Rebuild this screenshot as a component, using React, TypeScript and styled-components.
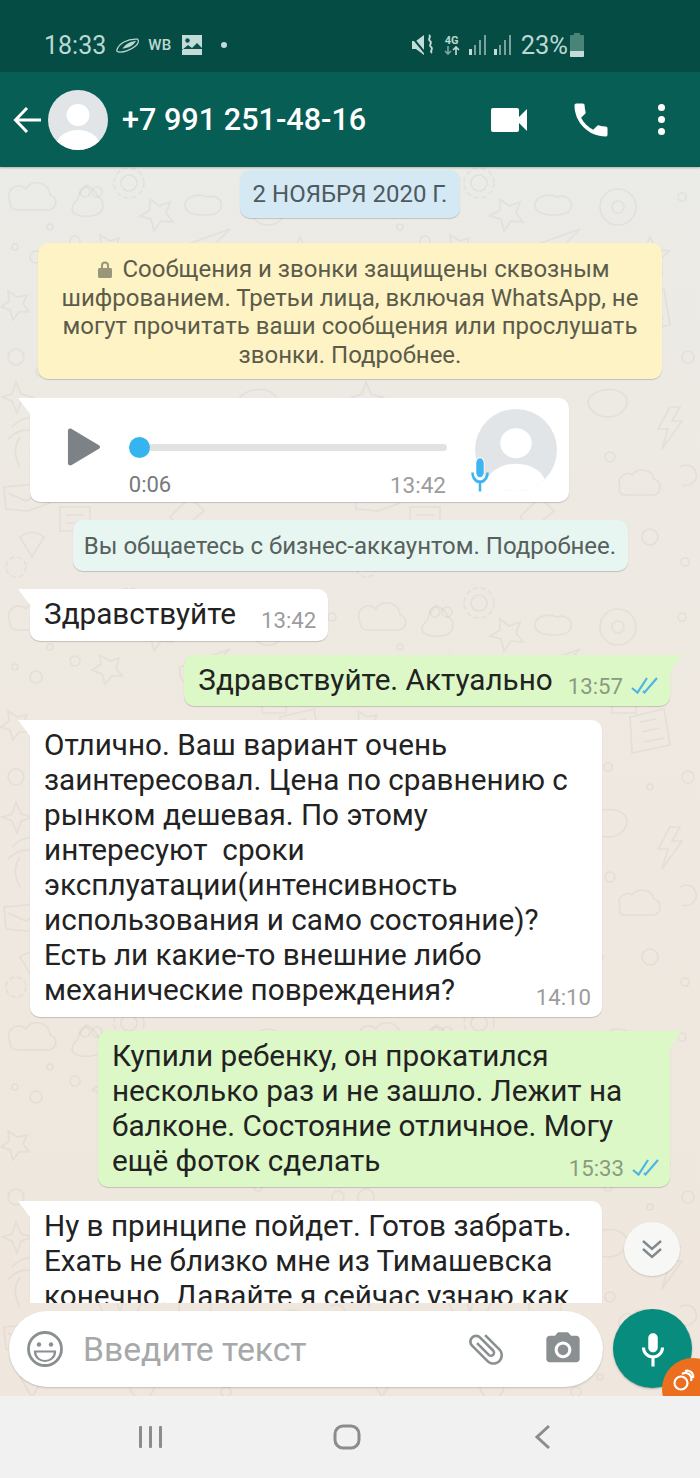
import React from 'react';
import styled, { createGlobalStyle } from 'styled-components';

const GlobalStyle = createGlobalStyle`
  html, body { margin: 0; padding: 0; }
  body { font-family: Roboto, "Liberation Sans", sans-serif; background: #f1f1f1; }
  #root { width: 700px; height: 1478px; overflow: hidden; }
`;

const Avatar = ({ size }: { size: number }) => (
  <svg width={size} height={size} viewBox="0 0 60 60">
    <defs>
      <clipPath id={`av${size}`}>
        <circle cx="30" cy="30" r="30" />
      </clipPath>
    </defs>
    <g clipPath={`url(#av${size})`}>
      <rect width="60" height="60" fill="#e1e5e8" />
      <ellipse cx="30" cy="25" rx="11.5" ry="11" fill="#fff" />
      <ellipse cx="30" cy="56" rx="22" ry="16" fill="#fff" />
    </g>
  </svg>
);

const Wallpaper = () => (
  <WallpaperSvg width="700" height="1229">
    <defs>
      <pattern id="doodles" width="350" height="420" patternUnits="userSpaceOnUse" x="0" y="0">
        <g fill="none" stroke="#000" strokeOpacity="0.045" strokeWidth="1.6">
          <path d="M10 36c-6-14 8-22 16-14 4-10 24-8 24 6 8 2 8 14-2 15H18c-5 0-8-3-8-7z" />
          <path d="M78 32c0-8 6-8 8-14 4 2 10 6 12 12 6 2 8 14-2 18-10 3-24 1-24-6 0-4 3-7 6-10z" />
          <circle cx="85" cy="25" r="5" />
          <circle cx="97" cy="25" r="5" />
          <circle cx="129" cy="16" r="8" />
          <circle cx="129" cy="16" r="15" strokeDasharray="5 3" />
          <path d="M150 32l9 7 11-4-4 11 7 9-12-1-7 10-3-12-11-3 10-6z" />
          <path d="M185 38c0-9 14-12 22-8 8-3 16 3 14 10-1 7-10 8-16 8-10 0-20-2-20-10z" />
          <circle cx="15" cy="80" r="3" />
          <circle cx="36" cy="90" r="6" />
          <circle cx="75" cy="74" r="5" />
          <circle cx="50" cy="60" r="3" />
          <path d="M100 68l10 6 9-3-3 10 6 8-10 0-7 8-3-10-10-4 9-6z" />
          <path d="M180 80l50-18-34 34c-10 3-18-2-16-16z" />
          <path d="M8 124l9 6 10-2-4 9 6 8-10 0-6 8-3-10-9-3 8-6z" />
          <circle cx="16" cy="190" r="8" />
          <path d="M16 215l5 12 12 3-12 4-4 12-5-12-10-4 10-3z" />
          <path d="M12 260c12-14 34-12 42 2M8 272c14-14 30-10 38 2M20 300c-8-14-4-24 0-30" />
          <circle cx="40" cy="205" r="4" />
          <path d="M250 40a18 18 0 1 0 36 0a18 18 0 1 0-36 0zM262 40a6 6 0 1 0 12 0a6 6 0 1 0-12 0z" />
          <path d="M300 70l6 12 13 2-9 9 2 13-12-6-11 6 2-13-9-9 13-2z" />
          <path d="M280 130l34-8 6 36-38 8zM290 135l16-3M292 145l18-4M294 155l20-4" />
          <path d="M240 230c10-10 30-10 36 0 4 8-4 20-18 20s-24-12-18-20z" />
          <path d="M320 240l-12 22h10l-6 20 20-28h-10l8-14z" />
          <circle cx="120" cy="290" r="22" />
          <path d="M120 275l5 14-5 16-5-16z" />
          <circle cx="195" cy="300" r="16" />
          <path d="M170 350l20-20 14 14-22 18zM60 340h30v24H60zM66 348h18M66 356h18" />
          <path d="M270 320c-4-10 6-16 12-12 6-8 20-6 22 4 8 2 8 14 0 16h-28c-6 0-8-4-6-8z" />
          <circle cx="250" cy="370" r="3" />
          <circle cx="226" cy="385" r="5" />
          <path d="M20 370c8-6 16-6 24 0l-12 20z" />
          <path d="M130 380a12 12 0 0 1 24 0c0 6-6 10-12 18-6-8-12-12-12-18z" />
          <path d="M4 320l2 22 22 2 22-8-4-20zM8 326l18 8 18-10" />
          <circle cx="16" cy="400" r="10" strokeDasharray="5 3" />
          <path d="M262 110h24v16h-24zM262 110l12 9 12-9" />
          <circle cx="332" cy="30" r="4" />
          <circle cx="258" cy="180" r="4" />
          <circle cx="338" cy="190" r="6" />
          <circle cx="300" cy="200" r="3" />
          <path d="M330 300c6-4 14-2 16 6 2 8-6 14-14 12" />
          <circle cx="260" cy="290" r="5" />
          <circle cx="300" cy="370" r="8" />
          <circle cx="335" cy="395" r="4" />
        </g>
      </pattern>
    </defs>
    <rect width="700" height="1229" fill="url(#doodles)" />
  </WallpaperSvg>
);

const Tick = () => (
  <svg width="27" height="18" viewBox="0 0 27 18" fill="none" stroke="#4db4e6" strokeWidth="2.200">
    <path d="M1 11l5.500 4.500L16 1" />
    <path d="M12 14l1.500 1.500L26 1" />
  </svg>
);

const Signal = () => (
  <svg width="18" height="22" viewBox="0 0 18 22" fill="#c4dcd8">
    <rect x="0" y="15" width="3" height="6" />
    <rect x="5" y="11" width="2" height="10" fillOpacity="0.6" />
    <rect x="10" y="6" width="2" height="15" fillOpacity="0.6" />
    <rect x="15" y="1" width="2" height="20" fillOpacity="0.6" />
  </svg>
);

export default function App() {
  return (
    <Screen>
      <GlobalStyle />
      <StatusBar>
        <StatusLeft>
          <StatusClock>18:33</StatusClock>
          <svg width="24" height="17" viewBox="0 0 30 20" fill="none">
            <path d="M1 16C3 8 14 1 27 2c2 2 1 6-3 9-6 5-15 8-21 7-1 0-2-1-2-2z" stroke="#b9d6d1" strokeWidth="1.600" />
            <path d="M8 14c4-6 10-9 17-10-3 6-9 9-17 10z" fill="#b9d6d1" />
          </svg>
          <WbLabel>WB</WbLabel>
          <svg width="20" height="20" viewBox="0 0 20 20">
            <path d="M0 0h20v20H0z" fill="#c4dcd8" />
            <circle cx="5.500" cy="5.500" r="2.200" fill="#07524a" />
            <path d="M0 15l6-5 4 3 5-5 5 5v1H0z" fill="#07524a" />
          </svg>
          <StatusDot />
        </StatusLeft>
        <StatusRight>
          <svg width="24" height="24" viewBox="0 0 24 24" fill="#c4dcd8">
            <path d="M1 8h4l8-6v20l-8-6H1z" />
            <path d="M0 3l15 18" stroke="#054c44" strokeWidth="2" />
            <path d="M18 2c3 2-2 4 1 6s-2 4 1 6-2 4 1 6" fill="none" stroke="#c4dcd8" strokeWidth="1.800" />
          </svg>
          <NetworkBox>
            <NetworkLabel>4G</NetworkLabel>
            <svg width="16" height="9" viewBox="0 0 16 9" fill="none" strokeWidth="1.600">
              <path d="M4 0v8M1 5l3 3 3-3" stroke="#7fa8a2" />
              <path d="M12 9V1M9 4l3-3 3 3" stroke="#c4dcd8" />
            </svg>
          </NetworkBox>
          <SignalGroup>
            <Signal />
            <Signal />
          </SignalGroup>
          <BatteryRow>
            <BatteryText>23%</BatteryText>
            <svg width="14" height="24" viewBox="0 0 14 24">
              <path d="M4 0h6v2h3a1 1 0 0 1 1 1v20a1 1 0 0 1-1 1H1a1 1 0 0 1-1-1V3a1 1 0 0 1 1-1h3z" fill="#4a8479" />
              <path d="M0 18h14v5a1 1 0 0 1-1 1H1a1 1 0 0 1-1-1z" fill="#c4dcd8" />
            </svg>
          </BatteryRow>
        </StatusRight>
      </StatusBar>

      <Header>
        <svg width="30" height="30" viewBox="0 0 30 30" fill="none" stroke="#fff" strokeWidth="3">
          <path d="M28 15H3M14 3L2.500 15 14 27" />
        </svg>
        <HeaderAvatar>
          <Avatar size={60} />
        </HeaderAvatar>
        <Title>+7 991 251-48-16</Title>
        <HeaderActions>
          <svg width="48" height="48" viewBox="0 0 24 24" fill="#fff">
            <path d="M17 10.500V7c0-.55-.45-1-1-1H4c-.55 0-1 .45-1 1v10c0 .55.45 1 1 1h12c.55 0 1-.45 1-1v-3.500l4 4v-11l-4 4z" />
          </svg>
          <svg width="44" height="44" viewBox="0 0 24 24" fill="#fff">
            <path d="M6.620 10.790c1.440 2.830 3.760 5.140 6.590 6.590l2.200-2.200c.27-.27.67-.36 1.020-.24 1.120.37 2.330.57 3.570.57.55 0 1 .45 1 1V20c0 .55-.45 1-1 1-9.390 0-17-7.610-17-17 0-.55.45-1 1-1h3.500c.55 0 1 .45 1 1 0 1.250.2 2.450.57 3.570.11.35.03.74-.25 1.020l-2.200 2.200z" />
          </svg>
          <MoreDots>
            <i />
            <i />
            <i />
          </MoreDots>
        </HeaderActions>
      </Header>

      <Chat>
        <Wallpaper />
        <Messages>
          <DateChip>2 НОЯБРЯ 2020 Г.</DateChip>
          <Notice>
            <LockIcon width="14" height="17" viewBox="0 0 14 17" fill="#9a9679">
              <path d="M3 7V4.500a4 4 0 0 1 8 0V7h1.500c.8 0 1.500.7 1.500 1.500V15.500c0 .8-.7 1.500-1.500 1.500h-11C.7 17 0 16.300 0 15.500V8.500C0 7.700.7 7 1.500 7zM5 7h4V4.500a2 2 0 0 0-4 0z" />
            </LockIcon>
            Сообщения и звонки защищены сквозным
            <br />
            шифрованием. Третьи лица, включая WhatsApp, не
            <br />
            могут прочитать ваши сообщения или прослушать
            <br />
            звонки. Подробнее.
          </Notice>
          <VoiceBubble>
            <svg width="34" height="38" viewBox="0 0 36 42" preserveAspectRatio="none">
              <path d="M1 3c0-2 2-3 4-2l29 18c1.500 1 1.500 3 0 4L5 41c-2 1-4 0-4-2z" fill="#7c8285" />
            </svg>
            <VoiceMain>
              <Track>
                <TrackKnob />
              </Track>
              <VoiceMeta>
                <span>0:06</span>
                <VoiceTime>13:42</VoiceTime>
              </VoiceMeta>
            </VoiceMain>
            <VoiceAvatar>
              <Avatar size={82} />
              <VoiceMic width="30" height="38" viewBox="0 0 24 24" preserveAspectRatio="none" fill="#3fb4ee">
                <path
                  stroke="#fff"
                  strokeWidth="1.200"
                  paintOrder="stroke"
                  d="M12 14c1.660 0 3-1.340 3-3V5c0-1.660-1.340-3-3-3S9 3.340 9 5v6c0 1.660 1.340 3 3 3z"
                />
                <path d="M17 11c0 2.760-2.240 5-5 5s-5-2.240-5-5H5c0 3.530 2.610 6.430 6 6.920V23h2v-5.080c3.390-.490 6-3.390 6-6.920h-2z" />
              </VoiceMic>
            </VoiceAvatar>
          </VoiceBubble>
          <BusinessChip>Вы общаетесь с бизнес-аккаунтом. Подробнее.</BusinessChip>
          <Bubble>
            <BubbleText>Здравствуйте</BubbleText>
            <Stamp>13:42</Stamp>
          </Bubble>
          <Bubble $out>
            <BubbleText>Здравствуйте. Актуально</BubbleText>
            <Stamp $out>
              13:57 <Tick />
            </Stamp>
          </Bubble>
          <Bubble $wide>
            <BubbleText>
              Отлично. Ваш вариант очень
              <br />
              заинтересовал. Цена по сравнению с
              <br />
              рынком дешевая. По этому
              <br />
              интересуют&nbsp; сроки
              <br />
              эксплуатации(интенсивность
              <br />
              использования и само состояние)?
              <br />
              Есть ли какие-то внешние либо
              <br />
              механические повреждения?
            </BubbleText>
            <Stamp $wide>14:10</Stamp>
          </Bubble>
          <Bubble $out $wide>
            <BubbleText>
              Купили ребенку, он прокатился
              <br />
              несколько раз и не зашло. Лежит на
              <br />
              балконе. Состояние отличное. Могу
              <br />
              ещё фоток сделать
            </BubbleText>
            <Stamp $out $wide>
              15:33 <Tick />
            </Stamp>
          </Bubble>
          <Bubble $wide>
            <BubbleText>
              Ну в принципе пойдет. Готов забрать.
              <br />
              Ехать не близко мне из Тимашевска
              <br />
              конечно. Давайте я сейчас узнаю как
            </BubbleText>
          </Bubble>
        </Messages>
        <ScrollDown>
          <svg width="26" height="26" viewBox="0 0 26 26" fill="none" stroke="#7e8a8c" strokeWidth="2.400">
            <path d="M4 5l9 8 9-8M4 13l9 8 9-8" />
          </svg>
        </ScrollDown>
        <Composer>
          <InputPill>
            <svg width="38" height="38" viewBox="0 0 38 38" fill="none" stroke="#8a9092" strokeWidth="2.800">
              <circle cx="19" cy="19" r="16.500" />
              <circle cx="13" cy="14.500" r="2.200" fill="#8a9092" stroke="none" />
              <circle cx="25" cy="14.500" r="2.200" fill="#8a9092" stroke="none" />
              <path d="M9 21.500h20c0 6-5 9.500-10 9.500S9 27.500 9 21.500z" strokeWidth="2.200" />
            </svg>
            <Placeholder>Введите текст</Placeholder>
            <svg width="42" height="42" viewBox="0 0 24 24" fill="#8a9092">
              <path
                transform="rotate(-45 12 12)"
                d="M16.500 6v11.500c0 2.210-1.790 4-4 4s-4-1.790-4-4V5c0-1.380 1.120-2.500 2.500-2.500s2.500 1.120 2.500 2.500v10.500c0 .55-.45 1-1 1s-1-.45-1-1V6H10v9.500c0 1.380 1.120 2.500 2.500 2.500s2.500-1.120 2.500-2.500V5c0-2.210-1.790-4-4-4S7 2.790 7 5v12.500c0 3.040 2.460 5.500 5.500 5.500s5.500-2.460 5.500-5.500V6h-1.500z"
              />
            </svg>
            <CameraIcon width="40" height="40" viewBox="0 0 24 24" fill="#8a9092">
              <circle cx="12" cy="12.500" r="3.200" />
              <path d="M9 2L7.170 4H4c-1.100 0-2 .9-2 2v12c0 1.100.9 2 2 2h16c1.100 0 2-.9 2-2V6c0-1.100-.9-2-2-2h-3.170L15 2H9zm3 15.500c-2.760 0-5-2.240-5-5s2.240-5 5-5 5 2.240 5 5-2.240 5-5 5z" />
            </CameraIcon>
          </InputPill>
          <MicButton>
            <svg width="38" height="38" viewBox="0 0 24 24" fill="#fff">
              <path d="M12 14c1.660 0 3-1.340 3-3V5c0-1.660-1.340-3-3-3S9 3.340 9 5v6c0 1.660 1.340 3 3 3z" />
              <path d="M17 11c0 2.760-2.240 5-5 5s-5-2.240-5-5H5c0 3.530 2.610 6.430 6 6.920V23h2v-5.080c3.390-.490 6-3.390 6-6.920h-2z" />
            </svg>
          </MicButton>
          <OrangeBadge>
            <svg width="26" height="26" viewBox="0 0 26 26" fill="none" stroke="#fff" strokeWidth="2.200">
              <circle cx="10" cy="15" r="6.500" />
              <path d="M11 6a6 6 0 0 1 9 7" />
              <path d="M14 3a6 6 0 0 1 8 7" />
            </svg>
          </OrangeBadge>
        </Composer>
      </Chat>

      <NavBar>
        <svg width="28" height="24" viewBox="0 0 28 24" fill="#8c8c8c">
          <rect x="2" y="1" width="3" height="22" rx="1" />
          <rect x="12" y="1" width="3" height="22" rx="1" />
          <rect x="22" y="1" width="3" height="22" rx="1" />
        </svg>
        <HomeIcon width="28" height="26" viewBox="0 0 28 26" fill="none" stroke="#8c8c8c" strokeWidth="3">
          <rect x="2" y="2" width="24" height="22" rx="8" />
        </HomeIcon>
        <svg width="20" height="26" viewBox="0 0 20 26" fill="none" stroke="#8c8c8c" strokeWidth="3">
          <path d="M16 2L4 13l12 11" />
        </svg>
      </NavBar>
    </Screen>
  );
}

const Screen = styled.div`
  width: 700px;
  height: 1478px;
  display: flex;
  flex-direction: column;
  overflow: hidden;
`;

const StatusBar = styled.div`
  height: 72px;
  flex: none;
  background: #054c44;
  display: flex;
  align-items: center;
  justify-content: space-between;
  padding: 18px 116px 0 44px;
  box-sizing: border-box;
  color: #bcd8d3;
`;

const StatusLeft = styled.div`
  display: flex;
  align-items: center;
  gap: 8px;
`;

const StatusClock = styled.span`
  font-size: 25px;
  margin-right: 2px;
`;

const WbLabel = styled.span`
  font-size: 15px;
  font-weight: 500;
  letter-spacing: 0.4px;
  margin-right: 2px;
`;

const StatusDot = styled.span`
  width: 6px;
  height: 6px;
  border-radius: 50%;
  background: #c4dcd8;
  margin-left: 11px;
`;

const StatusRight = styled.div`
  display: flex;
  align-items: center;
  gap: 9px;
`;

const NetworkBox = styled.div`
  display: flex;
  flex-direction: column;
  align-items: center;
  line-height: 11px;
`;

const NetworkLabel = styled.span`
  font-size: 11px;
  font-weight: 700;
`;

const SignalGroup = styled.div`
  display: flex;
  gap: 7px;
`;

const BatteryRow = styled.div`
  display: flex;
  align-items: center;
  gap: 2px;
`;

const BatteryText = styled.span`
  font-size: 25.500px;
`;

const Header = styled.div`
  height: 95px;
  flex: none;
  background: #075e55;
  box-shadow: 0 1px 2px rgba(0, 0, 0, 0.25);
  display: flex;
  align-items: center;
  padding: 0 15px 0 13px;
  box-sizing: border-box;
  color: #fff;
  position: relative;
  z-index: 2;
`;

const HeaderAvatar = styled.div`
  margin-left: 5px;
  height: 60px;
  display: flex;
`;

const Title = styled.div`
  font-size: 30.600px;
  font-weight: 500;
  margin-left: 14px;
`;

const HeaderActions = styled.div`
  margin-left: auto;
  display: flex;
  align-items: center;
  gap: 36px;
`;

const MoreDots = styled.div`
  display: flex;
  flex-direction: column;
  gap: 5px;
  margin: 0 20px 0 9px;

  i {
    width: 7px;
    height: 7px;
    border-radius: 50%;
    background: #fff;
    display: block;
  }
`;

const Chat = styled.div`
  flex: 1;
  min-height: 0;
  position: relative;
  display: flex;
  flex-direction: column;
  background: linear-gradient(180deg, #ebebe7 0%, #eee9e2 30%, #efe7dd 100%);
`;

const WallpaperSvg = styled.svg`
  position: absolute;
  inset: 0;
`;

const Messages = styled.div`
  position: relative;
  height: 1136px;
  flex: none;
  overflow: hidden;
  padding: 3px 30px 0;
  box-sizing: border-box;
  display: flex;
  flex-direction: column;
  align-items: flex-start;
  color: #222;
`;

const DateChip = styled.div`
  flex: none;
  align-self: center;
  height: 48px;
  width: 220px;
  box-sizing: border-box;
  display: flex;
  align-items: center;
  justify-content: center;
  background: #d4e9f4;
  border-radius: 10px;
  box-shadow: 0 1px 1px rgba(0, 0, 0, 0.18);
  font-size: 24px;
  color: #4d5a60;
`;

const Notice = styled.div`
  flex: none;
  align-self: center;
  margin-top: 25px;
  width: 624px;
  height: 136px;
  box-sizing: border-box;
  padding: 12px 8px 0;
  background: #fdf3c5;
  border-radius: 10px;
  box-shadow: 0 1px 1px rgba(0, 0, 0, 0.18);
  font-size: 24px;
  line-height: 28.700px;
  color: #5c5b4a;
  text-align: center;
`;

const LockIcon = styled.svg`
  margin: 0 10px 0 8px;
  vertical-align: -1px;
`;

const VoiceBubble = styled.div`
  flex: none;
  position: relative;
  margin-top: 19px;
  width: 539px;
  height: 104px;
  box-sizing: border-box;
  background: #fff;
  border-radius: 0 10px 10px 10px;
  box-shadow: 0 1px 1px rgba(0, 0, 0, 0.18);
  display: flex;
  align-items: flex-start;
  padding: 30px 12px 0 37px;

  &::before {
    content: '';
    position: absolute;
    left: -12px;
    top: 0;
    border-top: 16px solid #fff;
    border-left: 12px solid transparent;
  }
`;

const VoiceMain = styled.div`
  margin-left: 28px;
  width: 320px;
  display: flex;
  flex-direction: column;
`;

const Track = styled.div`
  position: relative;
  height: 7px;
  margin-top: 16px;
  border-radius: 4px;
  background: #e2e2e2;
`;

const TrackKnob = styled.span`
  position: absolute;
  left: 0;
  top: -7px;
  width: 21px;
  height: 21px;
  border-radius: 50%;
  background: #36b4f0;
`;

const VoiceMeta = styled.div`
  margin-top: 21px;
  display: flex;
  justify-content: space-between;
  font-size: 22px;
  color: #77797b;
`;

const VoiceTime = styled.span`
  color: #9a9c9e;
  font-size: 22.500px;
  margin-right: 1px;
`;

const VoiceAvatar = styled.div`
  position: relative;
  margin: -19px 0 0 28px;
  height: 82px;
`;

const VoiceMic = styled.svg`
  position: absolute;
  left: -10px;
  bottom: -2px;
`;

const BusinessChip = styled.div`
  flex: none;
  align-self: center;
  margin: 18px 0 4px;
  width: 555px;
  height: 51px;
  box-sizing: border-box;
  display: flex;
  align-items: center;
  justify-content: center;
  background: #e8f6f1;
  border-radius: 10px;
  box-shadow: 0 1px 1px rgba(0, 0, 0, 0.18);
  font-size: 24px;
  color: #56605c;
`;

const Bubble = styled.div<{ $out?: boolean; $wide?: boolean }>`
  position: relative;
  flex: none;
  margin-top: 14px;
  align-self: ${(p) => (p.$out ? 'flex-end' : 'flex-start')};
  background: ${(p) => (p.$out ? '#dcf8c6' : '#fff')};
  border-radius: ${(p) => (p.$out ? '10px 0 10px 10px' : '0 10px 10px 10px')};
  box-shadow: 0 1px 1px rgba(0, 0, 0, 0.18);
  box-sizing: border-box;
  display: ${(p) => (p.$wide ? 'block' : 'flex')};
  width: ${(p) => (p.$wide ? '572px' : 'auto')};
  padding: 7px 12px ${(p) => (p.$out ? '9px' : '10px')} 14px;
  font-size: 29.700px;
  line-height: 35px;

  &::before {
    content: '';
    position: absolute;
    top: 0;
    ${(p) => (p.$out ? 'right: -12px;' : 'left: -12px;')}
    border-top: 16px solid ${(p) => (p.$out ? '#dcf8c6' : '#fff')};
    ${(p) => (p.$out ? 'border-right' : 'border-left')}: 12px solid transparent;
  }
`;

const BubbleText = styled.div`
  white-space: nowrap;
`;

const Stamp = styled.div<{ $wide?: boolean; $out?: boolean }>`
  flex: none;
  align-self: flex-end;
  display: flex;
  align-items: center;
  gap: 8px;
  justify-content: flex-end;
  font-size: 22.200px;
  line-height: 26px;
  color: ${(p) => (p.$out ? '#8b9a80' : '#9a9c9e')};
  margin: ${(p) => (p.$wide ? '-23px -1px -3px 0' : p.$out ? '0 0 -2px 15px' : '0 0 -2px 25px')};
`;

const ScrollDown = styled.div`
  position: absolute;
  right: 20px;
  top: 1055px;
  width: 56px;
  height: 54px;
  border-radius: 50%;
  background: #f7f7f5;
  box-shadow: 0 1px 2px rgba(0, 0, 0, 0.15);
  display: flex;
  align-items: center;
  justify-content: center;
`;

const Composer = styled.div`
  position: relative;
  flex: 1;
  display: flex;
  align-items: flex-start;
  padding: 6px 8px 0 9px;
  gap: 10px;
  overflow: hidden;
`;

const InputPill = styled.div`
  width: 594px;
  height: 76px;
  margin-top: 2px;
  flex: none;
  box-sizing: border-box;
  background: #fff;
  border-radius: 38px;
  box-shadow: 0 1px 2px rgba(0, 0, 0, 0.18);
  display: flex;
  align-items: center;
  padding: 0 20px 0 17px;
`;

const Placeholder = styled.span`
  flex: 1;
  margin-left: 19px;
  font-size: 33.700px;
  color: #a6a8a9;
`;

const CameraIcon = styled.svg`
  margin-left: 36px;
`;

const MicButton = styled.div`
  width: 79px;
  height: 79px;
  flex: none;
  border-radius: 50%;
  background: #078c7e;
  box-shadow: 0 1px 2px rgba(0, 0, 0, 0.25);
  display: flex;
  align-items: center;
  justify-content: center;
`;

const OrangeBadge = styled.div`
  position: absolute;
  right: -24px;
  bottom: -24px;
  width: 62px;
  height: 62px;
  border-radius: 50%;
  background: #ec6f1f;
  display: flex;
  padding: 10px 0 0 9px;
  box-sizing: border-box;
`;

const NavBar = styled.div`
  height: 82px;
  flex: none;
  background: #f1f1f1;
  display: flex;
  align-items: center;
  justify-content: space-between;
  padding: 0 147px 0 137px;
  box-sizing: border-box;
`;

const HomeIcon = styled.svg`
  margin-left: -4px;
`;
